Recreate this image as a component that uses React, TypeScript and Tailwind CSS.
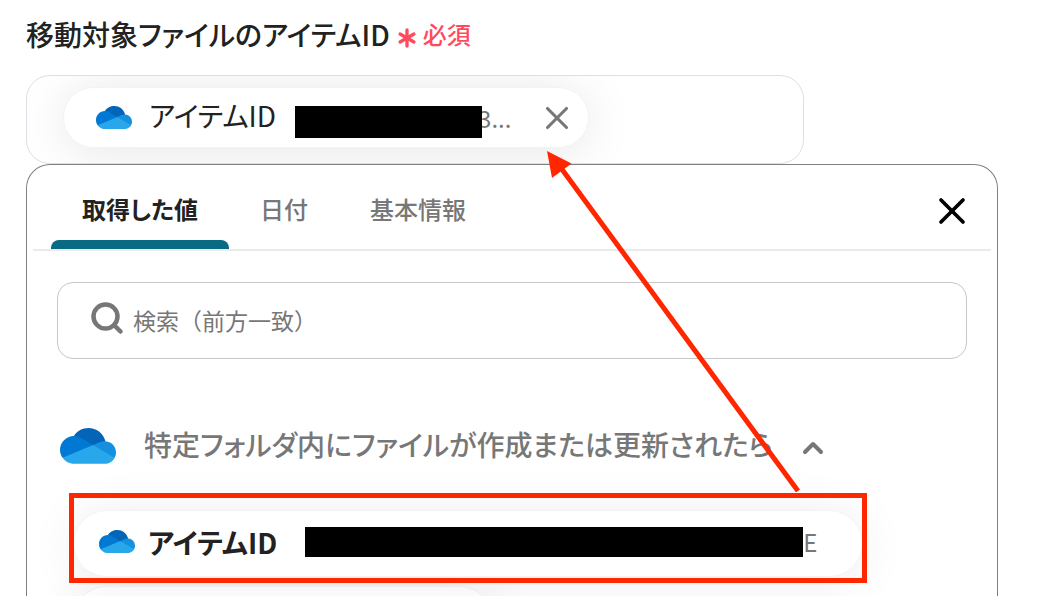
import { Asterisk, ChevronUp, Search, X } from 'lucide-react';

function CloudIcon({ className }: { className: string }) {
  return (
    <svg viewBox="0 0 1030 660" className={className} aria-hidden="true">
      <path fill="#0364b8" d="M622.3 445.3l212.6-203.3C790.7 69.8 615.3-34 443.1 10.2 365.6 30 298.2 78.1 254.2 145c3.3 0 368.1 300.3 368.1 300.3z" />
      <path fill="#0078d4" d="M392.8 183.3c-40.6-25.2-87.5-38.5-135.3-38.4l-3.3.1C112.1 146.8-1.7 263.4 0 405.6c.6 51.5 16.7 101.7 46.2 144l318.6-39.9L609 312.8z" />
      <path fill="#1490df" d="M834.9 242c-4.7-.3-9.4-.5-14.1-.5-28.5 0-56.8 5.8-83 17.1L609 312.8l142 175.5L1005 550c54.8-101.7 16.7-228.6-85-283.4-26.3-13.9-55.3-22.6-85.1-24.6z" />
      <path fill="#28a8ea" d="M46.3 549.6C94.4 618.8 173.3 660 257.5 659.9h563.3c76.9 0 147.7-42.2 184.2-109.9L609 312.8z" />
    </svg>
  );
}

const tabs = ['取得した値', '日付', '基本情報'];

export default function App() {
  return (
    <div className="relative flex h-screen flex-col overflow-hidden bg-white pt-3.5 pr-[52px] pl-[26px] font-['Noto_Sans_CJK_JP',sans-serif] text-[#222] [font-feature-settings:'palt']">
      <div className="mb-[21px] flex shrink-0 items-center">
        <h1 className="text-[28px] leading-10 font-medium">移動対象ファイルのアイテムID</h1>
        <span className="ml-px flex items-center text-2xl leading-10 font-medium text-[#ff4a5e]">
          <Asterisk className="mt-2 size-8" strokeWidth={2.5} />
          必須
        </span>
      </div>

      {/* Target field */}
      <div className="w-4/5 shrink-0 overflow-hidden rounded-3xl border border-[#dcdfe5] pt-[11px] pb-[15px] pl-9">
        <div className="flex h-[61px] w-[526px] items-center rounded-full border border-[#f3f3f3] bg-white pr-3 pl-8 shadow-[0_4px_50px_rgba(0,0,0,0.1)]">
          <CloudIcon className="w-9 shrink-0" />
          <span className="mb-1.5 ml-[17px] text-[28px] leading-10">アイテムID</span>
          <span className="relative mt-2 ml-[19px] h-8 w-[187px] shrink-0 bg-black" />
          <span className="-ml-1 text-2xl text-[#777] [font-feature-settings:normal]">3...</span>
          <button type="button" aria-label="削除" className="ml-auto">
            <X className="size-[38px] text-[#777]" strokeWidth={2} />
          </button>
        </div>
      </div>

      {/* Value picker */}
      <section className="min-h-0 flex-1 rounded-t-3xl border border-b-0 border-[#808080] bg-white px-1.5">
        <div className="flex items-center border-b-2 border-[#ebebeb] pl-[18px]">
          <div role="tablist" className="flex text-2xl font-medium">
            {tabs.map((tab, i) => (
              <button
                key={tab}
                type="button"
                role="tab"
                aria-selected={i === 0}
                className={
                  i === 0
                    ? 'relative h-[84px] px-[31px] pt-1 font-bold text-[#222] after:absolute after:inset-x-0 after:bottom-0 after:h-[9px] after:rounded-t-lg after:bg-[#086a83]'
                    : 'h-[84px] px-[31px] pt-1 text-[#777]'
                }
              >
                {tab}
              </button>
            ))}
          </div>
          <button type="button" aria-label="閉じる" className="mt-2 mr-[17px] ml-auto text-black">
            <X className="size-11" strokeWidth={2} />
          </button>
        </div>

        <div className="px-6 pt-[31px]">
          <label className="flex h-[77px] items-center rounded-2xl border border-[#c8c8c8] pl-[31px] text-[#777]">
            <Search className="mb-1.5 size-9 shrink-0" strokeWidth={3} />
            <input
              type="text"
              aria-label="検索"
              placeholder="検索（前方一致）"
              className="ml-2 min-w-0 flex-1 text-[23px] outline-none [font-feature-settings:normal] placeholder:text-[#777]"
            />
          </label>

          <button type="button" className="mt-[69px] flex items-center text-[#777]">
            <CloudIcon className="ml-[3px] w-14 shrink-0" />
            <span className="mb-1 ml-7 text-[28px] leading-8 font-medium whitespace-nowrap">
              特定フォルダ内にファイルが作成または更新されたら
            </span>
            <ChevronUp className="mt-1 ml-6 size-8 shrink-0" strokeWidth={3} />
          </button>

          <div className="mt-[46px] ml-4 flex flex-col items-start gap-[9px]">
            <div className="relative flex h-[67px] w-[790px] items-center rounded-full border border-[#f3f3f3] bg-white pb-1 pl-[25px] shadow-[0_4px_50px_rgba(0,0,0,0.08)]">
              <CloudIcon className="w-9 shrink-0" />
              <span className="ml-[13px] text-[28px] leading-10 font-bold">アイテムID</span>
              <span className="ml-7 h-[30px] w-[498px] shrink-0 bg-black" />
              <span className="text-2xl text-[#777]">E</span>
              <span className="absolute -inset-x-[5px] -top-[18px] -bottom-[7px] border-[5px] border-[#ff2600]" />
            </div>
            <div className="h-[67px] w-[420px] rounded-full border border-[#f3f3f3] bg-white shadow-[0_4px_50px_rgba(0,0,0,0.08)]" />
          </div>
        </div>
      </section>

      {/* Arrow from the picked value to the field */}
      <svg
        viewBox="0 0 254 342"
        className="pointer-events-none absolute top-[150px] left-[547px] w-[254px]"
        aria-hidden="true"
      >
        <path d="M14 18L251 341" stroke="#ff2600" strokeWidth="5" />
        <path d="M0 1L24.5 13.5L5 28z" fill="#ff2600" />
      </svg>
    </div>
  );
}
